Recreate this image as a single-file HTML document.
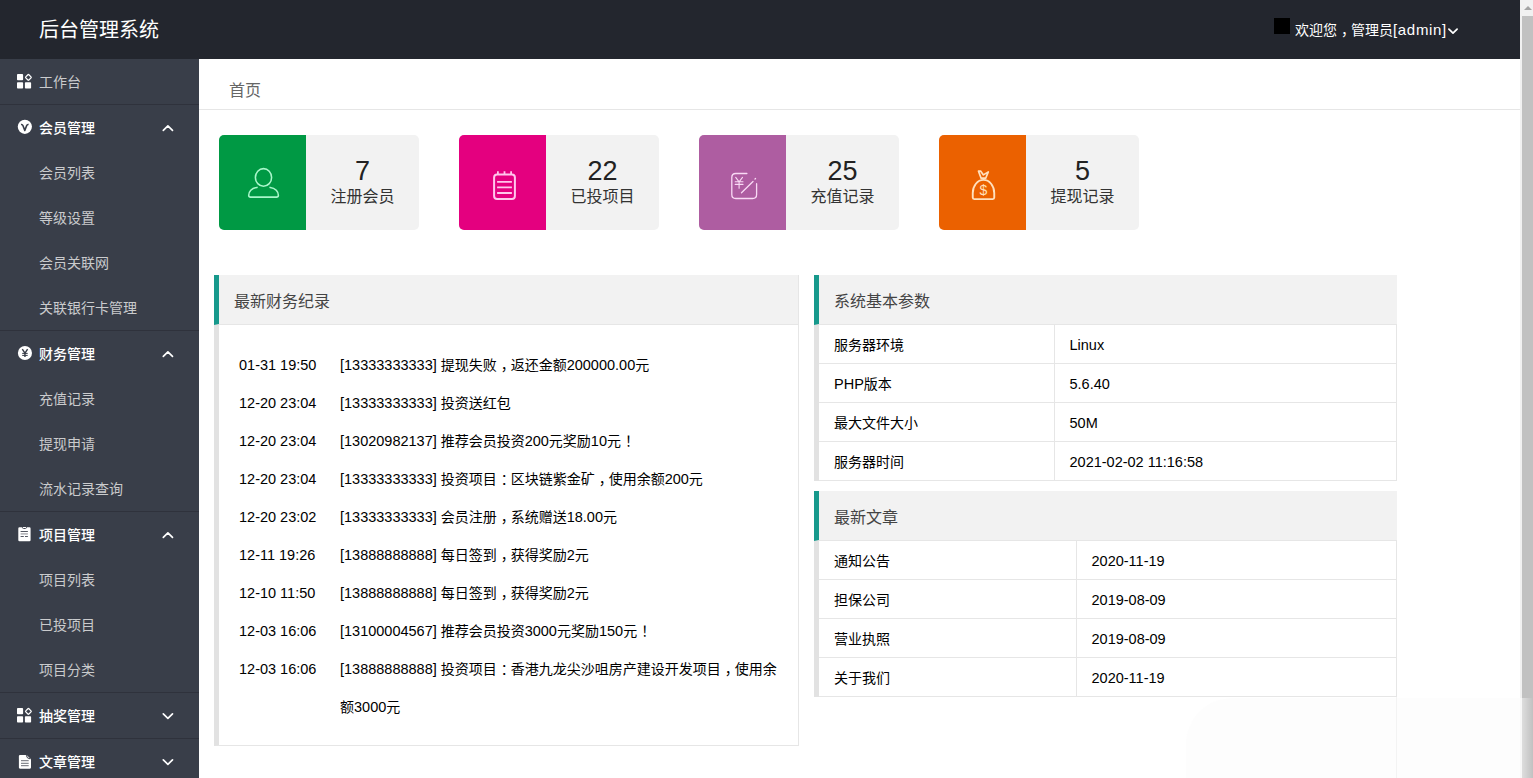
<!DOCTYPE html>
<html lang="zh-CN">
<head>
<meta charset="utf-8">
<title>后台管理系统</title>
<style>
*{box-sizing:border-box;margin:0;padding:0}
html,body{width:1533px;height:778px;overflow:hidden;background:#fff}
body{position:relative;font-family:"Liberation Sans","Noto Sans CJK SC",sans-serif;font-size:14px;color:#000}
ul{list-style:none}
.abs{position:absolute}
/* header */
#hd{position:absolute;left:0;top:0;width:1520px;height:59px;background:#23262e}
#logo{position:absolute;left:39px;top:0;height:59px;line-height:60px;font-size:20px;color:#fff;white-space:nowrap}
#user{position:absolute;left:1295px;top:0;height:59px;line-height:59px;font-size:14px;color:#fff;white-space:nowrap}
#user .lt{letter-spacing:.68px;font-size:15px}
.cm{position:relative;left:4px}
#avatar{position:absolute;left:1274px;top:18px;width:16px;height:16px;background:#000}
/* scrollbar */
#sb{position:absolute;left:1520px;top:0;width:13px;height:778px;background:#f1f1f1}
#sb .thumb{position:absolute;left:2px;top:16px;width:11px;height:762px;background:#c1c1c1}
#sb .arr{position:absolute;left:4px;top:6px;width:0;height:0;border-left:4px solid transparent;border-right:4px solid transparent;border-bottom:4px solid #a3a3a3}
/* sidebar */
#side{position:absolute;left:0;top:59px;width:199px;height:719px;background:#393e49;overflow:hidden}
#side li.top{border-bottom:1px solid #2f323c;position:relative}
#side a{display:block;height:45px;line-height:47px;padding-left:39px;font-size:14px;color:#cacbcd;white-space:nowrap;position:relative}
#side li.top>a.t{color:#fff;font-weight:500}
#side .ic{position:absolute;left:0;top:0;width:45px;height:45px}
#side .ch{position:absolute;left:158px;top:0;width:20px;height:45px}
/* main */
#crumb{position:absolute;left:229px;top:80px;font-size:16px;line-height:22px;color:#666}
#crumbline{position:absolute;left:199px;top:109px;width:1321px;height:1px;background:#e6e6e6}
.card{position:absolute;top:135px;width:200px;height:95px;background:#f2f2f2;border-radius:5px;overflow:hidden}
.card .c{position:absolute;left:0;top:0;width:87px;height:95px}
.card .n{position:absolute;left:87px;top:19px;width:113px;text-align:center;font-size:27px;line-height:34px;color:#222}
.card .l{position:absolute;left:87px;top:50px;width:113px;text-align:center;font-size:16px;line-height:24px;color:#333}
.card svg{position:absolute;left:0;top:0}
.panel{position:absolute;border-left:5px solid #e2e2e2;background:#fff}
.panel .ph{position:absolute;left:-5px;top:0;height:50px;border-left:5px solid #17998c;background:#f2f2f2;border-bottom:1px solid #e6e6e6;font-size:16px;line-height:53px;padding-left:15px;color:#444}
#p1{left:214px;top:275px;width:585px;height:471px;border-right:1px solid #e6e6e6;border-bottom:1px solid #e6e6e6}
#p1 .ph{width:584px}
#p1 ul{position:absolute;left:20px;top:71px;width:540px}
#p1 li{position:relative;line-height:38px;font-size:14px;padding-left:101px}
#p1 li b{position:absolute;left:0;top:0;font-weight:normal}
i{font-style:normal;font-size:14.5px}
.tb{position:absolute;left:0;top:49px;border-collapse:collapse;font-size:14px}
.tb td{border:1px solid #e6e6e6;height:39px;padding:2px 15px 0;line-height:20px}
.tb td:first-child{border-left:none}
#p2{left:814px;top:275px;width:583px;height:206px}
#p3{left:814px;top:491px;width:583px;height:206px}
#p2 .ph,#p3 .ph{width:583px}
</style>
</head>
<body>
<div id="hd">
  <div id="logo">后台管理系统</div>
  <div id="avatar"></div>
  <div id="user">欢迎您<span class="cm">，</span>管理员<span class="lt">[admin]</span><svg width="12" height="10" viewBox="0 0 12 10" style="position:absolute;left:152px;top:27px"><path d="M1.9 2.1 L6 6.2 L10.1 2.1" fill="none" stroke="#fff" stroke-width="1.7" stroke-linecap="round" stroke-linejoin="round"/></svg></div>
</div>
<div id="sb"><div class="arr"></div><div class="thumb"></div></div>

<div id="side">
<ul>
  <li class="top"><a><svg class="ic" viewBox="0 0 45 45"><g fill="#fff"><rect x="17" y="15.1" width="6.1" height="6.1" rx=".8"/><rect x="17" y="23.3" width="6.1" height="6.2" rx=".8"/><rect x="24.9" y="23.3" width="6.2" height="6.2" rx=".8"/></g><rect x="26.2" y="16.2" width="4.4" height="4.4" rx=".7" transform="rotate(45 28.4 18.4)" fill="none" stroke="#fff" stroke-width="1.25"/></svg>工作台</a></li>
  <li class="top"><a class="t"><svg class="ic" viewBox="0 0 45 45"><circle cx="24.85" cy="21.85" r="7.1" fill="#fff"/><path d="M21 19.5 Q22.4 19.2 22.9 20.5 L24.8 25.4 L26.7 20.5 Q27.2 19.2 28.6 19.5" fill="none" stroke="#393e49" stroke-width="1.6" stroke-linejoin="round"/></svg>会员管理<svg class="ch" viewBox="0 0 20 45"><path d="M5.3 25.3 L9.9 20.8 L14.5 25.3" fill="none" stroke="#fff" stroke-width="1.7" stroke-linecap="round" stroke-linejoin="round"/></svg></a>
    <ul><li><a>会员列表</a></li><li><a>等级设置</a></li><li><a>会员关联网</a></li><li><a>关联银行卡管理</a></li></ul></li>
  <li class="top"><a class="t"><svg class="ic" viewBox="0 0 45 45"><circle cx="24.95" cy="21.95" r="7.05" fill="#fff"/><g fill="none" stroke="#393e49"><path d="M22.3 18.1 L24.95 22.2 L27.6 18.1" stroke-width="1.4"/><path d="M24.95 22 L24.95 26" stroke-width="1.4"/><path d="M22.2 22.4 H27.7 M22.2 24.4 H27.7" stroke-width="1"/></g></svg>财务管理<svg class="ch" viewBox="0 0 20 45"><path d="M5.3 25.3 L9.9 20.8 L14.5 25.3" fill="none" stroke="#fff" stroke-width="1.7" stroke-linecap="round" stroke-linejoin="round"/></svg></a>
    <ul><li><a>充值记录</a></li><li><a>提现申请</a></li><li><a>流水记录查询</a></li></ul></li>
  <li class="top"><a class="t"><svg class="ic" viewBox="0 0 45 45"><path d="M19.5 15.3 H21.8 Q22.3 17 24.45 17 Q26.6 17 27.1 15.3 H29.4 Q30.6 15.3 30.6 16.5 V28 Q30.6 29.2 29.4 29.2 H19.5 Q18.3 29.2 18.3 28 V16.5 Q18.3 15.3 19.5 15.3 Z" fill="#fff"/><rect x="22.7" y="14.9" width="3.5" height="1.1" rx=".5" fill="#fff"/><g stroke-width="1" fill="none"><path d="M20.6 19.5 H27.9" stroke="#555963"/><path d="M20.6 21.9 H27.9" stroke="#a9abb0" stroke-width="1.4"/><path d="M20.6 24.5 H23.8 M25 24.5 H27.9" stroke="#555963"/></g></svg>项目管理<svg class="ch" viewBox="0 0 20 45"><path d="M5.3 25.3 L9.9 20.8 L14.5 25.3" fill="none" stroke="#fff" stroke-width="1.7" stroke-linecap="round" stroke-linejoin="round"/></svg></a>
    <ul><li><a>项目列表</a></li><li><a>已投项目</a></li><li><a>项目分类</a></li></ul></li>
  <li class="top"><a class="t"><svg class="ic" viewBox="0 0 45 45"><g fill="#fff"><rect x="17" y="15.1" width="6.1" height="6.1" rx=".8"/><rect x="17" y="23.3" width="6.1" height="6.2" rx=".8"/><rect x="24.9" y="23.3" width="6.2" height="6.2" rx=".8"/></g><rect x="26.2" y="16.2" width="4.4" height="4.4" rx=".7" transform="rotate(45 28.4 18.4)" fill="none" stroke="#fff" stroke-width="1.25"/></svg>抽奖管理<svg class="ch" viewBox="0 0 20 45"><path d="M5.3 20.8 L9.9 25.3 L14.5 20.8" fill="none" stroke="#fff" stroke-width="1.7" stroke-linecap="round" stroke-linejoin="round"/></svg></a></li>
  <li class="top"><a class="t"><svg class="ic" viewBox="0 0 45 45"><path d="M20 15.9 H26.6 L31 20.3 V28.6 Q31 29.75 29.9 29.75 H20 Q18.9 29.75 18.9 28.6 V17 Q18.9 15.9 20 15.9 Z" fill="#fff"/><path d="M26.3 16.2 Q26.6 19.6 30.2 19.9" fill="none" stroke="#393e49" stroke-width="1"/><g stroke="#6a6d76" stroke-width="1" fill="none"><path d="M21 21.7 H28.7 M21 24.3 H28.7 M21 26.7 H28.7"/></g></svg>文章管理<svg class="ch" viewBox="0 0 20 45"><path d="M5.3 20.8 L9.9 25.3 L14.5 20.8" fill="none" stroke="#fff" stroke-width="1.7" stroke-linecap="round" stroke-linejoin="round"/></svg></a></li>
</ul>
</div>

<div id="crumb">首页</div>
<div id="crumbline"></div>

<div class="card" style="left:219px"><div class="c" style="background:#009944"><svg width="87" height="95" viewBox="0 0 87 95"><g fill="none" stroke="#a8f6ca" stroke-width="1.55"><ellipse cx="44.5" cy="42.4" rx="8.1" ry="8.8"/><path d="M38 52.4 C32.5 53 29.7 57 29.7 60.3 Q29.7 62.1 31.6 62.1 L57.5 62.1 Q59.4 62.1 59.4 60.3 C59.4 57 56.5 53 51.1 52.4" stroke-linecap="round"/></g></svg></div><div class="n">7</div><div class="l">注册会员</div></div>
<div class="card" style="left:459px"><div class="c" style="background:#e4007f"><svg width="87" height="95" viewBox="0 0 87 95"><g fill="none" stroke="#ffc6ec"><rect x="35.1" y="39.4" width="20.8" height="24.7" rx="3" stroke-width="2"/><path d="M38.9 36.2 V39 M45.5 36.2 V39 M52.1 36.2 V39" stroke-width="1.8"/><path d="M38.1 46.8 H52.9 M38.1 52.4 H52.9 M38.1 58 H52.9" stroke-width="1.8"/></g></svg></div><div class="n">22</div><div class="l">已投项目</div></div>
<div class="card" style="left:699px"><div class="c" style="background:#ae5da1"><svg width="87" height="95" viewBox="0 0 87 95"><g fill="none" stroke="#f9daf5" stroke-width="1.3" stroke-linecap="round"><path d="M47.9 38.5 H36.8 Q32.8 38.5 32.8 42.5 V59.5 Q32.8 63.5 36.8 63.5 H53.6 Q57.6 63.5 57.6 59.5 V48.7"/><path d="M42.5 57.7 L54 46.5"/><path d="M56 44 L56.5 43.5"/><path d="M36.7 42.4 L40.1 46.8 L43.5 42.4 M40.1 46.8 V53.2 M36.2 46.8 H44 M36.2 49.4 H44" stroke-width="1.1"/></g></svg></div><div class="n">25</div><div class="l">充值记录</div></div>
<div class="card" style="left:939px"><div class="c" style="background:#eb6100"><svg width="87" height="95" viewBox="0 0 87 95"><g fill="none" stroke="#ffe0bd" stroke-width="1.9" stroke-linejoin="round"><path d="M33.75 58 A10.75 13.1 0 0 1 55.25 58 L55.25 62.6 Q55.25 64.1 53.75 64.1 L35.25 64.1 Q33.75 64.1 33.75 62.6 Z"/><path d="M39.5 36.1 L41.6 36.1 L44.4 39.9 L49.3 36.9 L46.7 43.2 L42.1 43.2 Z" stroke-width="1.7"/></g><text x="44.4" y="59.6" font-family="Liberation Sans, sans-serif" font-size="14" text-anchor="middle" fill="#ffe0bd">$</text></svg></div><div class="n">5</div><div class="l">提现记录</div></div>

<div class="panel" id="p1">
  <div class="ph">最新财务纪录</div>
  <ul>
    <li><b><i>01-31 19:50</i></b><i>[13333333333]</i> 提现失败<span class="cm">，</span>返还金额<i>200000.00</i>元</li>
    <li><b><i>12-20 23:04</i></b><i>[13333333333]</i> 投资送红包</li>
    <li><b><i>12-20 23:04</i></b><i>[13020982137]</i> 推荐会员投资<i>200</i>元奖励<i>10</i>元<span class="cm">！</span></li>
    <li><b><i>12-20 23:04</i></b><i>[13333333333]</i> 投资项目<span class="cm">：</span>区块链紫金矿<span class="cm">，</span>使用余额<i>200</i>元</li>
    <li><b><i>12-20 23:02</i></b><i>[13333333333]</i> 会员注册<span class="cm">，</span>系统赠送<i>18.00</i>元</li>
    <li><b><i>12-11 19:26</i></b><i>[13888888888]</i> 每日签到<span class="cm">，</span>获得奖励<i>2</i>元</li>
    <li><b><i>12-10 11:50</i></b><i>[13888888888]</i> 每日签到<span class="cm">，</span>获得奖励<i>2</i>元</li>
    <li><b><i>12-03 16:06</i></b><i>[13100004567]</i> 推荐会员投资<i>3000</i>元奖励<i>150</i>元<span class="cm">！</span></li>
    <li><b><i>12-03 16:06</i></b><i>[13888888888]</i> 投资项目<span class="cm">：</span>香港九龙尖沙咀房产建设开发项目<span class="cm">，</span>使用余<br>额<i>3000</i>元</li>
  </ul>
</div>

<div class="panel" id="p2">
  <div class="ph">系统基本参数</div>
  <table class="tb" style="width:578px"><tr><td style="width:235px">服务器环境</td><td><i>Linux</i></td></tr><tr><td><i>PHP</i>版本</td><td><i>5.6.40</i></td></tr><tr><td>最大文件大小</td><td><i>50M</i></td></tr><tr><td>服务器时间</td><td><i>2021-02-02 11:16:58</i></td></tr></table>
</div>
<div class="panel" id="p3">
  <div class="ph">最新文章</div>
  <table class="tb" style="width:578px"><tr><td style="width:257px">通知公告</td><td><i>2020-11-19</i></td></tr><tr><td>担保公司</td><td><i>2019-08-09</i></td></tr><tr><td>营业执照</td><td><i>2019-08-09</i></td></tr><tr><td>关于我们</td><td><i>2020-11-19</i></td></tr></table>
</div>
<div style="position:absolute;left:1186px;top:698px;width:334px;height:80px;background:rgba(251,251,251,.45);border-top-left-radius:46px"></div>
<div style="position:absolute;left:1520px;top:698px;width:13px;height:80px;background:linear-gradient(to right,rgba(255,255,255,.55),rgba(255,255,255,0))"></div>
<div style="position:absolute;left:1396px;top:697px;width:1px;height:81px;background:#f3f3f3"></div>
</body>
</html>
